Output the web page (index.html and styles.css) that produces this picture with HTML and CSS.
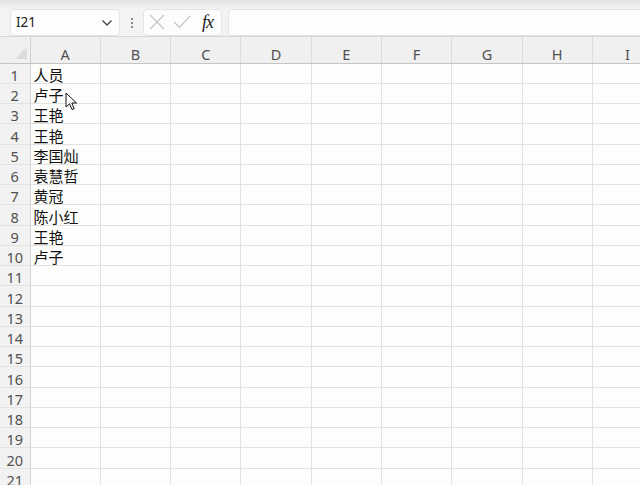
FILE: index.html
```html
<!DOCTYPE html>
<html>
    <head>
        <meta charset="UTF-8">
        <title>Sheet</title>
        <link rel="stylesheet" href="styles.css">
    </head>
    <body>
        <div class="formula-bar">
            <div class="name-box">
                <span>I21</span>
                <svg class="chevron" width="12" height="8" viewBox="0 0 12 8"><path d="M1.5 1.5 L6 6 L10.5 1.5" fill="none" stroke="#444" stroke-width="1.3"/></svg>
            </div>
            <div class="grip"><i></i><i></i><i></i></div>
            <div class="fx-box">
                <svg width="16" height="16" viewBox="0 0 16 16"><path d="M1 1 L15 15 M15 1 L1 15" stroke="#c4c4c4" stroke-width="1.2"/></svg>
                <svg width="18" height="14" viewBox="0 0 18 14"><path d="M1 7 L6.5 12.5 L17 1" fill="none" stroke="#c4c4c4" stroke-width="1.2"/></svg>
                <span class="fx">fx</span>
            </div>
            <div class="formula-input"></div>
        </div>

        <div class="sheet">
            <table class="grid">
                <thead>
                    <tr>
                        <th class="corner"><span class="tri"></span></th>
                        <th>A</th><th>B</th><th>C</th><th>D</th><th>E</th><th>F</th><th>G</th><th>H</th><th>I</th>
                    </tr>
                </thead>
                <tbody>
                    <tr><th>1</th><td>人员</td><td></td><td></td><td></td><td></td><td></td><td></td><td></td><td></td></tr>
                    <tr><th>2</th><td>卢子</td><td></td><td></td><td></td><td></td><td></td><td></td><td></td><td></td></tr>
                    <tr><th>3</th><td>王艳</td><td></td><td></td><td></td><td></td><td></td><td></td><td></td><td></td></tr>
                    <tr><th>4</th><td>王艳</td><td></td><td></td><td></td><td></td><td></td><td></td><td></td><td></td></tr>
                    <tr><th>5</th><td>李国灿</td><td></td><td></td><td></td><td></td><td></td><td></td><td></td><td></td></tr>
                    <tr><th>6</th><td>袁慧哲</td><td></td><td></td><td></td><td></td><td></td><td></td><td></td><td></td></tr>
                    <tr><th>7</th><td>黄冠</td><td></td><td></td><td></td><td></td><td></td><td></td><td></td><td></td></tr>
                    <tr><th>8</th><td>陈小红</td><td></td><td></td><td></td><td></td><td></td><td></td><td></td><td></td></tr>
                    <tr><th>9</th><td>王艳</td><td></td><td></td><td></td><td></td><td></td><td></td><td></td><td></td></tr>
                    <tr><th>10</th><td>卢子</td><td></td><td></td><td></td><td></td><td></td><td></td><td></td><td></td></tr>
                    <tr><th>11</th><td></td><td></td><td></td><td></td><td></td><td></td><td></td><td></td><td></td></tr>
                    <tr><th>12</th><td></td><td></td><td></td><td></td><td></td><td></td><td></td><td></td><td></td></tr>
                    <tr><th>13</th><td></td><td></td><td></td><td></td><td></td><td></td><td></td><td></td><td></td></tr>
                    <tr><th>14</th><td></td><td></td><td></td><td></td><td></td><td></td><td></td><td></td><td></td></tr>
                    <tr><th>15</th><td></td><td></td><td></td><td></td><td></td><td></td><td></td><td></td><td></td></tr>
                    <tr><th>16</th><td></td><td></td><td></td><td></td><td></td><td></td><td></td><td></td><td></td></tr>
                    <tr><th>17</th><td></td><td></td><td></td><td></td><td></td><td></td><td></td><td></td><td></td></tr>
                    <tr><th>18</th><td></td><td></td><td></td><td></td><td></td><td></td><td></td><td></td><td></td></tr>
                    <tr><th>19</th><td></td><td></td><td></td><td></td><td></td><td></td><td></td><td></td><td></td></tr>
                    <tr><th>20</th><td></td><td></td><td></td><td></td><td></td><td></td><td></td><td></td><td></td></tr>
                    <tr><th>21</th><td></td><td></td><td></td><td></td><td></td><td></td><td></td><td></td><td></td></tr>
                </tbody>
            </table>

            <svg class="cursor" width="13" height="19" viewBox="0 0 13 19"><path d="M1 1 L1 15 L4.5 11.8 L7 17.5 L9.2 16.6 L6.8 11 L11.5 11 Z" fill="#fff" stroke="#111" stroke-width="1" stroke-linejoin="round"/></svg>
        </div>
    </body>
</html>
```

FILE: styles.css
```css
html, body {
    margin: 0;
    padding: 0;
    width: 640px;
    height: 485px;
    overflow: hidden;
    background: #fdfdfb;
    font-family: "Segoe UI", "Noto Sans", "Noto Sans CJK SC", sans-serif;
}
.formula-bar {
    display: flex;
    align-items: center;
    height: 37px;
    padding: 0 0 0 10px;
    box-sizing: border-box;
    background: linear-gradient(#e2e2e2 0, #ebebeb 4px, #f3f3f3 8px, #f3f3f3 100%);
    border-bottom: 1px solid #d6d6d6;
}
.name-box,
.fx-box,
.formula-input {
    flex-shrink: 0;
    height: 27px;
    margin-top: 9px;
    margin-bottom: 1px;
    box-sizing: border-box;
    background: #fdfdfd;
    border: 1px solid #e4e4e4;
    border-radius: 4px;
}
.name-box {
    width: 110px;
    display: flex;
    align-items: center;
    justify-content: space-between;
    padding: 0 6px 0 5px;
    font-size: 13.5px;
    color: #222;
}
.chevron {
    margin-top: 1px;
}
.grip {
    flex-shrink: 0;
    width: 23px;
    display: flex;
    flex-direction: column;
    align-items: center;
    gap: 2px;
    margin-top: 9px;
}
.grip i {
    display: block;
    width: 2px;
    height: 2px;
    background: #8a8a8a;
}
.fx-box {
    width: 79px;
    display: flex;
    align-items: center;
    gap: 8px;
    padding: 0 6px 0 5px;
}
.fx {
    font-family: "Liberation Serif", serif;
    font-style: italic;
    font-size: 18px;
    color: #222;
    margin-left: 3px;
    letter-spacing: -1px;
}
.formula-input {
    flex: 1 0 auto;
    margin-left: 6px;
    border-right: none;
    border-radius: 4px 0 0 4px;
}
.sheet {
    position: relative;
}
.grid {
    border-collapse: collapse;
    table-layout: fixed;
    width: 663px;
}
.grid th,
.grid td {
    padding: 0;
    box-sizing: border-box;
    overflow: hidden;
    white-space: nowrap;
    vertical-align: bottom;
}
.grid thead th {
    height: 26px;
    width: 70.3px;
    background: #f0f0f0;
    border-right: 1px solid #dcdcdc;
    border-bottom: 1px solid #c4c4c4;
    font-weight: normal;
    font-size: 14.5px;
    color: #505050;
    text-align: center;
    line-height: 15px;
    padding-bottom: 1px;
    overflow: visible;
}
.grid thead th.corner {
    width: 30px;
    position: relative;
    border-right: 1px solid #cfcfcf;
}
.tri {
    position: absolute;
    right: 3px;
    bottom: 4px;
    width: 0;
    height: 0;
    border-left: 12px solid transparent;
    border-bottom: 12px solid #dcdcdc;
}
.grid tbody th {
    height: 20.25px;
    background: #f2f2f2;
    border-right: 1px solid #cfcfcf;
    border-bottom: 1px solid #e2e2e2;
    font-weight: normal;
    font-size: 14.5px;
    color: #505050;
    text-align: center;
    line-height: 16px;
}
.grid td {
    height: 20.25px;
    border-right: 1px solid #e2e2e2;
    border-bottom: 1px solid #e2e2e2;
    font-size: 15px;
    color: #111;
    padding-left: 3px;
    line-height: 16px;
}
.cursor {
    position: absolute;
    left: 65px;
    top: 55px;
}
```
